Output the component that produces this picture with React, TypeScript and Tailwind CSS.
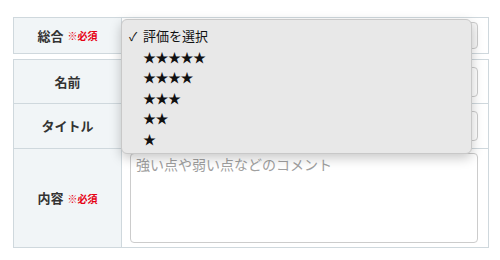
import React from "react";

const font = { fontFamily: '"Noto Sans CJK JP", "Noto Sans", sans-serif' };

function Required() {
  return <span className="ml-1 text-[10px] font-bold text-[#e60012]">※必須</span>;
}

function Label({ children, h }: { children: React.ReactNode; h: string }) {
  return (
    <div className={`flex w-[108px] shrink-0 items-center justify-center border-r border-[#cfd8dd] bg-[#f1f5f7] text-[13px] font-bold text-[#333] ${h}`}>
      {children}
    </div>
  );
}

const options = ["★★★★★", "★★★★", "★★★", "★★", "★"];

export default function App() {
  return (
    <div className="relative h-[260px] w-[500px] bg-white" style={font}>
      <div className="px-[13px] pt-[17px]">
        <div className="flex w-[476px] border border-[#cfd8dd]">
          <Label h="h-[35px]">
            総合<Required />
          </Label>
          <div className="flex flex-1 items-center pl-2 pr-[10px]">
            <div className="flex h-[27px] w-full items-center justify-end rounded-[4px] border border-[#ccc] bg-[#f7f7f7] pr-1.5">
              <svg width="8" height="6" viewBox="0 0 8 6"><path d="M1 1l3 3 3-3" stroke="#222" strokeWidth="1.6" fill="none" /></svg>
            </div>
          </div>
        </div>

        <div className="mt-[5px] w-[476px] border border-[#cfd8dd]">
          <div className="flex border-b border-[#cfd8dd]">
            <Label h="h-[43px]">名前</Label>
            <div className="flex flex-1 items-center pl-2 pr-[10px]">
              <div className="h-[30px] w-full rounded-[4px] border border-[#ccc] bg-white" />
            </div>
          </div>
          <div className="flex border-b border-[#cfd8dd]">
            <Label h="h-[44px]">タイトル</Label>
            <div className="flex flex-1 items-center pl-2 pr-[10px]">
              <div className="h-[30px] w-full rounded-[4px] border border-[#ccc] bg-white" />
            </div>
          </div>
          <div className="flex">
            <Label h="h-[98px]">
              内容<Required />
            </Label>
            <div className="flex flex-1 items-center pl-2 pr-[10px]">
              <div className="h-[90px] w-full rounded-[4px] border border-[#ccc] bg-white px-[5px] text-[14px] leading-[20px] text-[#a0a0a0]">
                強い点や弱い点などのコメント
              </div>
            </div>
          </div>
        </div>
      </div>

      <div className="absolute left-[121px] top-[19px] w-[351px] rounded-[6px] border border-[#c8c8c8] bg-[#e8e8e8] pb-[4px] pt-[5px] text-[13px] text-[#111] shadow-[0_4px_12px_rgba(0,0,0,0.22)]">
        <div className="flex h-[21px] items-center">
          <span className="w-[21px] pl-[7px] text-[12px]">✓</span>
          <span>評価を選択</span>
        </div>
        {options.map((o) => (
          <div key={o} className="flex h-[20.5px] items-center pl-[21px] tracking-[-0.5px]">
            {o}
          </div>
        ))}
      </div>
    </div>
  );
}
